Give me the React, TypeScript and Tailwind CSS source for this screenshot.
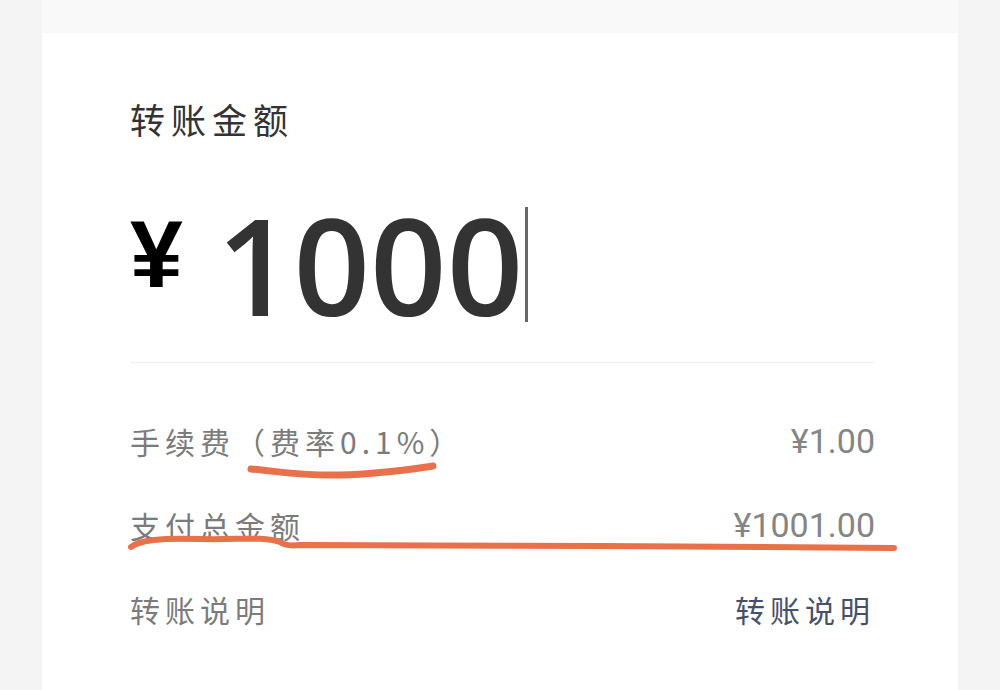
import React from 'react';

export default function App() {
  const rows = [
    { label: '手续费（费率0.1%）', value: '¥1.00', valueClass: 'text-[#858585] font-["Roboto",sans-serif] text-[34px]' },
    { label: '支付总金额', value: '¥1001.00', valueClass: 'text-[#858585] font-["Roboto",sans-serif] text-[34px]' },
    { label: '转账说明', value: '转账说明', valueClass: 'text-[#46506a] font-["Noto_Sans_CJK_SC",sans-serif] text-[30px] tracking-[5px]' },
  ];

  return (
    <div className="relative w-full h-[690px] overflow-hidden bg-[#f4f4f4] px-[42px] flex flex-col">
      <div className="h-[33px] bg-[#f9f9f9] shrink-0" />

      {/* Card */}
      <div className="flex-1 bg-white pl-[88px] pr-[83px] flex flex-col">
        <div className="mt-[64px] h-[44px] leading-[44px] text-[35px] tracking-[6px] text-[#333] font-['Noto_Sans_CJK_SC',sans-serif]">
          转账金额
        </div>

        {/* Amount input */}
        <div className="mt-[54px] h-[140px] flex items-start">
          <span className="mt-[12px] text-[95px] leading-none font-bold text-black font-['Liberation_Sans',sans-serif]">¥</span>
          <span className="mt-[2px] ml-[34px] text-[134px] leading-none font-semibold text-[#333] font-['Open_Sans',sans-serif]">1000</span>
          <span className="mt-[12px] ml-[2px] w-[3px] h-[115px] bg-[#666]" />
        </div>

        <div className="mt-[27px] h-px bg-[#f0f0f0]" />

        <div className="mt-[36px] flex flex-col">
          {rows.map((row, idx) => (
            <div key={idx} className="h-[84px] flex items-center justify-between">
              <span className="text-[30px] tracking-[5px] text-[#7b7b7b] font-['Noto_Sans_CJK_SC',sans-serif]">
                {row.label}
              </span>
              <span className={row.valueClass}>{row.value}</span>
            </div>
          ))}
        </div>
      </div>

      {/* Hand-drawn underline marks */}
      <svg className="absolute inset-0 pointer-events-none" width="1000" height="690" viewBox="0 0 1000 690">
        <path
          d="M251 469 C 275 471, 300 476, 340 475 S 405 470, 433 466"
          fill="none"
          stroke="#e8704a"
          strokeWidth="7"
          strokeLinecap="round"
        />
        <path
          d="M131 547 C 140 540, 160 538, 200 539 S 262 536, 280 542 C 285 546, 292 546, 300 545 L 600 546 L 894 548"
          fill="none"
          stroke="#e8704a"
          strokeWidth="6"
          strokeLinecap="round"
          strokeLinejoin="round"
        />
      </svg>
    </div>
  );
}
